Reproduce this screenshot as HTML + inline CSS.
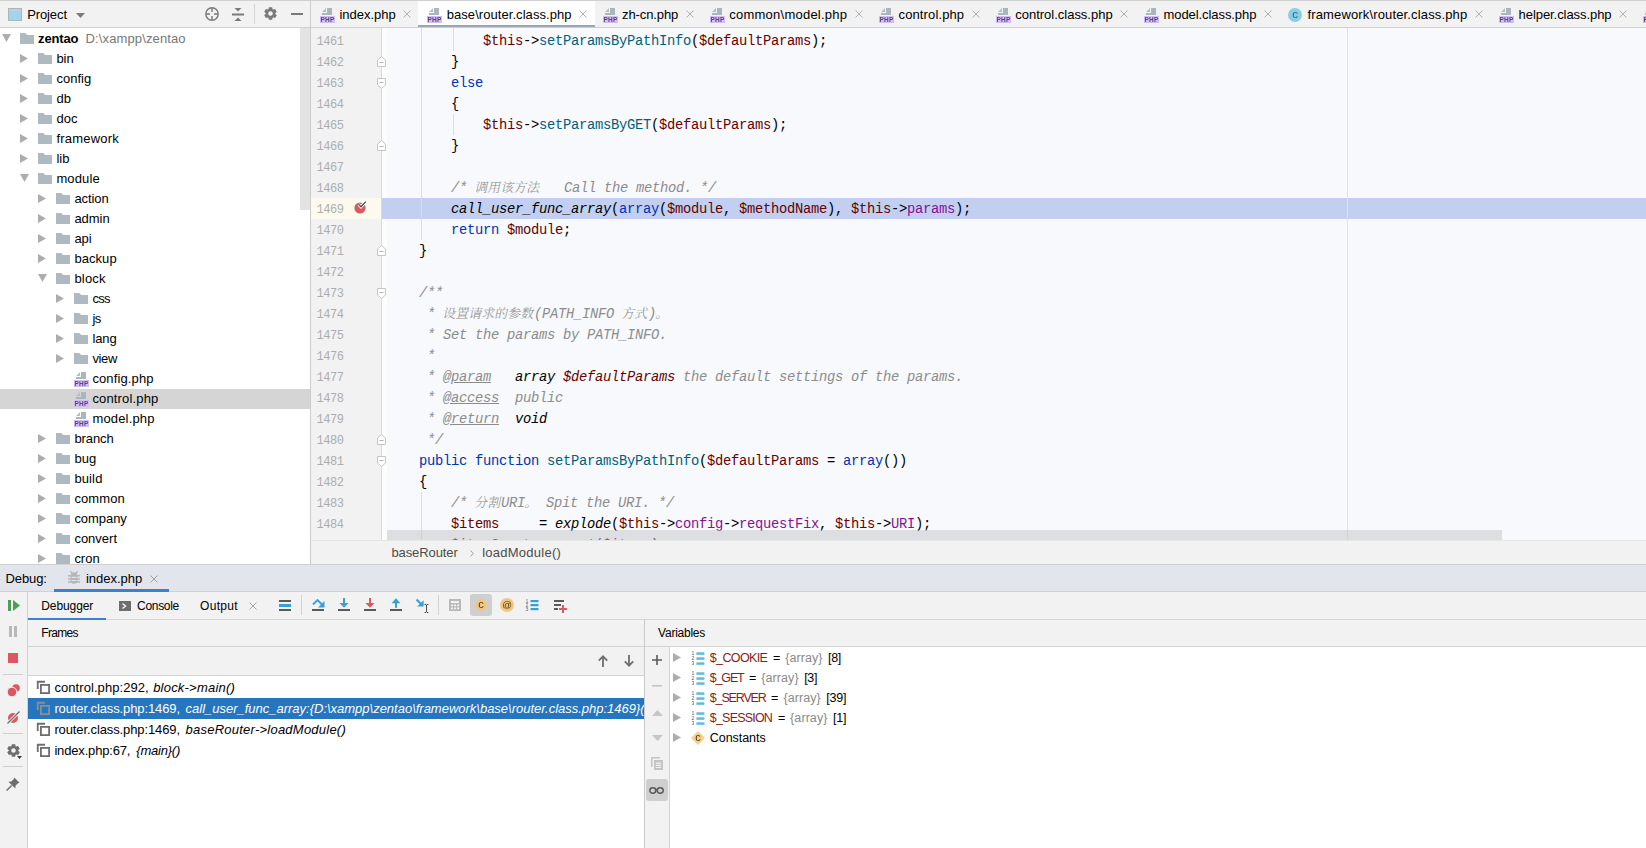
<!DOCTYPE html>
<html lang="en">
<head>
<meta charset="utf-8">
<title>zentao - router.class.php - PhpStorm</title>
<style>
*{box-sizing:border-box;margin:0;padding:0}
html,body{width:1646px;height:848px;overflow:hidden;background:#fff}
body{position:relative;font-family:"Liberation Sans","Noto Sans CJK SC",sans-serif;font-size:13px;color:#000}
.abs{position:absolute}
svg{display:block;overflow:visible}
.tx{position:absolute;top:0;white-space:pre}
#topline{left:0;top:0;width:1646px;height:1px;background:#d0d0d0}
#phead{left:0;top:1px;width:310px;height:27px;background:#f2f2f2;border-bottom:1px solid #d1d1d1;line-height:27px}
#tree{left:0;top:28px;width:310px;height:536px;background:#fff;overflow:hidden}
#vsep{left:310px;top:1px;width:1px;height:563px;background:#cbcbcb}
.row{position:absolute;left:0;width:310px;height:20px;line-height:19px;white-space:nowrap}
.row.sel{background:#d5d5d5}
.gray{color:#787878}
#tscroll{left:300px;top:0;width:10px;height:182px;background:#e3e3e3}
#tabs{left:311px;top:1px;width:1335px;height:27px;background:#f2f2f2;border-bottom:1px solid #d1d1d1;overflow:hidden;line-height:27px}
#tabact{left:107px;top:0;width:177px;height:26px;background:#fff}
#tabline{left:107px;top:24px;width:177px;height:3px;background:#99a5b9}
#editor{left:311px;top:28px;width:1335px;height:512px;background:#f7f9fd;overflow:hidden}
#gutter{left:0;top:0;width:71px;height:512px;background:#f2f2f2;border-right:1px solid #d9d9d9}
#gstrip{left:71px;top:0;width:5px;height:512px;background:#fdfdfe}
#curg{left:0;top:170px;width:70px;height:21px;background:#fcfaed}
#curl{left:71px;top:170px;width:1264px;height:21px;background:#c2cff0}
#margin{left:1036px;top:0;width:1px;height:512px;background:#e2e2e2}
.guide{position:absolute;width:1px;background:#dcdcdc}
.ln{position:absolute;left:0;width:70px;height:21px;line-height:21px;font-family:"Liberation Mono",monospace;color:#adadad}
.cl{position:absolute;left:76px;height:21px;line-height:21px;font-family:"Liberation Mono","Noto Sans CJK SC",monospace;font-size:13.8px;letter-spacing:-0.28px;white-space:pre;color:#000}
.cl b{letter-spacing:0;font-family:"Liberation Mono","Noto Serif CJK SC",serif;font-weight:300;font-size:13px;font-style:normal;display:inline-block;transform:skewX(-12deg)}
.v{color:#660000}.k{color:#0033b3}.f{color:#00627a}.p{color:#871094}.c{color:#8c8c8c;font-style:italic}.i{font-style:italic}
.u{text-decoration:underline}
#hscroll{left:76px;top:502px;width:1115px;height:10px;background:rgba(195,195,200,.5)}
#crumb{left:311px;top:540px;width:1335px;height:24px;background:#f2f2f2;border-top:1px solid #e6e6e6;line-height:24px;color:#4c4c4c}
#dhead{left:0;top:564px;width:1646px;height:28px;background:#e2e5ec;border-top:1px solid #d0d0d0;border-bottom:1px solid #d1d1d1;line-height:27px}
#dheadline{left:54px;top:24px;width:115px;height:3px;background:#3f80c9}
#dstripe{left:0;top:592px;width:28px;height:256px;background:#f2f2f2;border-right:1px solid #d1d1d1}
#dtool{left:28px;top:592px;width:1618px;height:28px;background:#f2f2f2;border-bottom:1px solid #d6d6d6;line-height:27px}
#dtabline{left:0;top:26px;width:78px;height:2px;background:#3f80c9}
.vs{position:absolute;width:1px;background:#d1d1d1}
.hs{position:absolute;height:1px;background:#cfcfcf}
#frames{left:28px;top:620px;width:616px;height:228px;background:#fff;overflow:hidden}
#fhead{left:0;top:0;width:616px;height:27px;background:#f2f2f2;border-bottom:1px solid #d4d4d4;line-height:27px}
#ftool{left:0;top:27px;width:616px;height:29px;background:#f2f2f2;border-bottom:1px solid #d4d4d4}
.fr{position:absolute;left:0;width:616px;height:21px;line-height:21px;white-space:nowrap;overflow:hidden}
.fr.sel{background:#2675bf;color:#fff}
#split{left:644px;top:620px;width:1px;height:228px;background:#c9c9c9}
#vars{left:645px;top:620px;width:1001px;height:228px;background:#fff;overflow:hidden}
#vhead{left:0;top:0;width:1001px;height:27px;background:#f2f2f2;border-bottom:1px solid #d4d4d4;line-height:27px}
#vtool{left:0;top:27px;width:25px;height:201px;background:#f2f2f2;border-right:1px solid #d1d1d1}
#vsel{left:1px;top:132px;width:22px;height:22px;background:#cfcfcf;border-radius:3px}
.vr{position:absolute;left:25px;width:976px;height:20px;line-height:22px;white-space:nowrap}
.vn{color:#8b1a1a}.vg{color:#808080}
</style>
</head>
<body>
<div class="abs" id="topline"></div>

<div class="abs" id="phead">
<svg class="abs" style="left:8px;top:7px" width="14" height="13" viewBox="0 0 14 13" ><rect x="0.5" y="0.5" width="13" height="12" fill="#9fd6eb" stroke="#aab5bc" stroke-width="1"/><rect x="1" y="1" width="12" height="2.2" fill="#c7cfd4"/></svg>
<span class="tx" style="left:27.2px;font-size:13px;letter-spacing:-0.109px;">Project</span>
<svg class="abs" style="left:75.5px;top:11.5px" width="9" height="5" viewBox="0 0 9 5" ><path d="M0 0h9L4.5 5z" fill="#7a7a7a"/></svg>
<svg class="abs" style="left:205px;top:6px" width="14" height="14" viewBox="0 0 14 14" ><circle cx="7" cy="7" r="6.2" fill="none" stroke="#7a7a7a" stroke-width="1.4"/><path d="M7 1v4M7 9v4M1 7h4M9 7h4" stroke="#7a7a7a" stroke-width="1.4"/></svg>
<svg class="abs" style="left:232px;top:6.5px" width="12" height="13" viewBox="0 0 12 13" ><path d="M2.5 0h7L6 3.5zM0 5.5h12v2H0zM2.5 13h7L6 9.5z" fill="#7a7a7a"/></svg>
<div class="vs" style="left:254px;top:3px;height:20px;background:#d4d4d4"></div>
<svg class="abs" style="left:264.3px;top:6px" width="13" height="13" viewBox="0 0 13 13" ><path d="M4.83 0.22L8.17 0.22L8.59 2.29L9.10 2.59L11.10 1.91L12.78 4.81L11.19 6.20L11.19 6.80L12.78 8.19L11.10 11.09L9.10 10.41L8.59 10.71L8.17 12.78L4.83 12.78L4.41 10.71L3.90 10.41L1.90 11.09L0.22 8.19L1.81 6.80L1.81 6.20L0.22 4.81L1.90 1.91L3.90 2.59L4.41 2.29z M8.8 6.5a2.3 2.3 0 1 0 -4.6 0a2.3 2.3 0 1 0 4.6 0z" fill="#7a7a7a" fill-rule="evenodd"/></svg>
<svg class="abs" style="left:291px;top:12px" width="12" height="2" viewBox="0 0 12 2" ><rect width="12" height="2" fill="#7a7a7a"/></svg>
</div>
<div class="abs" id="tree">
<div class="row" style="top:1px">
<svg class="abs" style="left:2px;top:5px" width="9" height="8" viewBox="0 0 9 8" ><path d="M0 0H9L4.5 8z" fill="#adadad"/></svg>
<svg class="abs" style="left:20px;top:4px" width="14" height="11" viewBox="0 0 14 11" ><path d="M0 0h5.2l2 2H14v9H0z" fill="#aeb9c0"/></svg>
<span class="tx" style="left:38.1px;font-size:13px;letter-spacing:-0.162px;font-weight:bold;">zentao</span>
<span class="tx" style="left:85.6px;font-size:13px;letter-spacing:0.122px;color:#787878;">D:\xampp\zentao</span>
</div>
<div class="row" style="top:21px">
<svg class="abs" style="left:20px;top:5px" width="8" height="9" viewBox="0 0 8 9" ><path d="M0 0L8 4.5L0 9z" fill="#adadad"/></svg>
<svg class="abs" style="left:38px;top:4px" width="14" height="11" viewBox="0 0 14 11" ><path d="M0 0h5.2l2 2H14v9H0z" fill="#aeb9c0"/></svg>
<span class="tx" style="left:56.4px;font-size:13px;letter-spacing:-0.016px;">bin</span>
</div>
<div class="row" style="top:41px">
<svg class="abs" style="left:20px;top:5px" width="8" height="9" viewBox="0 0 8 9" ><path d="M0 0L8 4.5L0 9z" fill="#adadad"/></svg>
<svg class="abs" style="left:38px;top:4px" width="14" height="11" viewBox="0 0 14 11" ><path d="M0 0h5.2l2 2H14v9H0z" fill="#aeb9c0"/></svg>
<span class="tx" style="left:56.4px;font-size:13px;letter-spacing:0.035px;">config</span>
</div>
<div class="row" style="top:61px">
<svg class="abs" style="left:20px;top:5px" width="8" height="9" viewBox="0 0 8 9" ><path d="M0 0L8 4.5L0 9z" fill="#adadad"/></svg>
<svg class="abs" style="left:38px;top:4px" width="14" height="11" viewBox="0 0 14 11" ><path d="M0 0h5.2l2 2H14v9H0z" fill="#aeb9c0"/></svg>
<span class="tx" style="left:56.4px;font-size:13px;letter-spacing:0.220px;">db</span>
</div>
<div class="row" style="top:81px">
<svg class="abs" style="left:20px;top:5px" width="8" height="9" viewBox="0 0 8 9" ><path d="M0 0L8 4.5L0 9z" fill="#adadad"/></svg>
<svg class="abs" style="left:38px;top:4px" width="14" height="11" viewBox="0 0 14 11" ><path d="M0 0h5.2l2 2H14v9H0z" fill="#aeb9c0"/></svg>
<span class="tx" style="left:56.4px;font-size:13px;letter-spacing:0.080px;">doc</span>
</div>
<div class="row" style="top:101px">
<svg class="abs" style="left:20px;top:5px" width="8" height="9" viewBox="0 0 8 9" ><path d="M0 0L8 4.5L0 9z" fill="#adadad"/></svg>
<svg class="abs" style="left:38px;top:4px" width="14" height="11" viewBox="0 0 14 11" ><path d="M0 0h5.2l2 2H14v9H0z" fill="#aeb9c0"/></svg>
<span class="tx" style="left:56.4px;font-size:13px;letter-spacing:0.214px;">framework</span>
</div>
<div class="row" style="top:121px">
<svg class="abs" style="left:20px;top:5px" width="8" height="9" viewBox="0 0 8 9" ><path d="M0 0L8 4.5L0 9z" fill="#adadad"/></svg>
<svg class="abs" style="left:38px;top:4px" width="14" height="11" viewBox="0 0 14 11" ><path d="M0 0h5.2l2 2H14v9H0z" fill="#aeb9c0"/></svg>
<span class="tx" style="left:56.4px;font-size:13px;letter-spacing:0.031px;">lib</span>
</div>
<div class="row" style="top:141px">
<svg class="abs" style="left:20px;top:5px" width="9" height="8" viewBox="0 0 9 8" ><path d="M0 0H9L4.5 8z" fill="#adadad"/></svg>
<svg class="abs" style="left:38px;top:4px" width="14" height="11" viewBox="0 0 14 11" ><path d="M0 0h5.2l2 2H14v9H0z" fill="#aeb9c0"/></svg>
<span class="tx" style="left:56.4px;font-size:13px;letter-spacing:0.144px;">module</span>
</div>
<div class="row" style="top:161px">
<svg class="abs" style="left:38px;top:5px" width="8" height="9" viewBox="0 0 8 9" ><path d="M0 0L8 4.5L0 9z" fill="#adadad"/></svg>
<svg class="abs" style="left:56px;top:4px" width="14" height="11" viewBox="0 0 14 11" ><path d="M0 0h5.2l2 2H14v9H0z" fill="#aeb9c0"/></svg>
<span class="tx" style="left:74.4px;font-size:13px;letter-spacing:-0.065px;">action</span>
</div>
<div class="row" style="top:181px">
<svg class="abs" style="left:38px;top:5px" width="8" height="9" viewBox="0 0 8 9" ><path d="M0 0L8 4.5L0 9z" fill="#adadad"/></svg>
<svg class="abs" style="left:56px;top:4px" width="14" height="11" viewBox="0 0 14 11" ><path d="M0 0h5.2l2 2H14v9H0z" fill="#aeb9c0"/></svg>
<span class="tx" style="left:74.4px;font-size:13px;letter-spacing:-0.021px;">admin</span>
</div>
<div class="row" style="top:201px">
<svg class="abs" style="left:38px;top:5px" width="8" height="9" viewBox="0 0 8 9" ><path d="M0 0L8 4.5L0 9z" fill="#adadad"/></svg>
<svg class="abs" style="left:56px;top:4px" width="14" height="11" viewBox="0 0 14 11" ><path d="M0 0h5.2l2 2H14v9H0z" fill="#aeb9c0"/></svg>
<span class="tx" style="left:74.4px;font-size:13px;letter-spacing:-0.049px;">api</span>
</div>
<div class="row" style="top:221px">
<svg class="abs" style="left:38px;top:5px" width="8" height="9" viewBox="0 0 8 9" ><path d="M0 0L8 4.5L0 9z" fill="#adadad"/></svg>
<svg class="abs" style="left:56px;top:4px" width="14" height="11" viewBox="0 0 14 11" ><path d="M0 0h5.2l2 2H14v9H0z" fill="#aeb9c0"/></svg>
<span class="tx" style="left:74.4px;font-size:13px;letter-spacing:0.063px;">backup</span>
</div>
<div class="row" style="top:241px">
<svg class="abs" style="left:38px;top:5px" width="9" height="8" viewBox="0 0 9 8" ><path d="M0 0H9L4.5 8z" fill="#adadad"/></svg>
<svg class="abs" style="left:56px;top:4px" width="14" height="11" viewBox="0 0 14 11" ><path d="M0 0h5.2l2 2H14v9H0z" fill="#aeb9c0"/></svg>
<span class="tx" style="left:74.4px;font-size:13px;letter-spacing:0.210px;">block</span>
</div>
<div class="row" style="top:261px">
<svg class="abs" style="left:56px;top:5px" width="8" height="9" viewBox="0 0 8 9" ><path d="M0 0L8 4.5L0 9z" fill="#adadad"/></svg>
<svg class="abs" style="left:74px;top:4px" width="14" height="11" viewBox="0 0 14 11" ><path d="M0 0h5.2l2 2H14v9H0z" fill="#aeb9c0"/></svg>
<span class="tx" style="left:92.4px;font-size:13px;letter-spacing:-0.733px;">css</span>
</div>
<div class="row" style="top:281px">
<svg class="abs" style="left:56px;top:5px" width="8" height="9" viewBox="0 0 8 9" ><path d="M0 0L8 4.5L0 9z" fill="#adadad"/></svg>
<svg class="abs" style="left:74px;top:4px" width="14" height="11" viewBox="0 0 14 11" ><path d="M0 0h5.2l2 2H14v9H0z" fill="#aeb9c0"/></svg>
<span class="tx" style="left:92.4px;font-size:13px;letter-spacing:-0.594px;">js</span>
</div>
<div class="row" style="top:301px">
<svg class="abs" style="left:56px;top:5px" width="8" height="9" viewBox="0 0 8 9" ><path d="M0 0L8 4.5L0 9z" fill="#adadad"/></svg>
<svg class="abs" style="left:74px;top:4px" width="14" height="11" viewBox="0 0 14 11" ><path d="M0 0h5.2l2 2H14v9H0z" fill="#aeb9c0"/></svg>
<span class="tx" style="left:92.4px;font-size:13px;letter-spacing:-0.120px;">lang</span>
</div>
<div class="row" style="top:321px">
<svg class="abs" style="left:56px;top:5px" width="8" height="9" viewBox="0 0 8 9" ><path d="M0 0L8 4.5L0 9z" fill="#adadad"/></svg>
<svg class="abs" style="left:74px;top:4px" width="14" height="11" viewBox="0 0 14 11" ><path d="M0 0h5.2l2 2H14v9H0z" fill="#aeb9c0"/></svg>
<span class="tx" style="left:92.4px;font-size:13px;letter-spacing:-0.352px;">view</span>
</div>
<div class="row" style="top:341px">
<svg class="abs" style="left:74px;top:2px;will-change:transform" width="16" height="17" viewBox="0 0 16 17" ><path d="M6 1L6 5L2 5z" fill="#b4bec5"/><path d="M7 1h5v7H2V6h5z" fill="#aab5bc"/><rect x="0" y="9" width="15" height="7" fill="#d4bdf7"/><text transform="translate(7.5 15.2) scale(0.5)" text-anchor="middle" font-family="Liberation Sans,sans-serif" font-weight="bold" font-size="13" letter-spacing="0.6" fill="#584a6c">PHP</text></svg>
<span class="tx" style="left:92.4px;font-size:13px;letter-spacing:0.121px;">config.php</span>
</div>
<div class="row sel" style="top:361px">
<svg class="abs" style="left:74px;top:2px;will-change:transform" width="16" height="17" viewBox="0 0 16 17" ><path d="M6 1L6 5L2 5z" fill="#b4bec5"/><path d="M7 1h5v7H2V6h5z" fill="#aab5bc"/><rect x="0" y="9" width="15" height="7" fill="#d4bdf7"/><text transform="translate(7.5 15.2) scale(0.5)" text-anchor="middle" font-family="Liberation Sans,sans-serif" font-weight="bold" font-size="13" letter-spacing="0.6" fill="#584a6c">PHP</text></svg>
<span class="tx" style="left:92.4px;font-size:13px;letter-spacing:0.162px;">control.php</span>
</div>
<div class="row" style="top:381px">
<svg class="abs" style="left:74px;top:2px;will-change:transform" width="16" height="17" viewBox="0 0 16 17" ><path d="M6 1L6 5L2 5z" fill="#b4bec5"/><path d="M7 1h5v7H2V6h5z" fill="#aab5bc"/><rect x="0" y="9" width="15" height="7" fill="#d4bdf7"/><text transform="translate(7.5 15.2) scale(0.5)" text-anchor="middle" font-family="Liberation Sans,sans-serif" font-weight="bold" font-size="13" letter-spacing="0.6" fill="#584a6c">PHP</text></svg>
<span class="tx" style="left:92.4px;font-size:13px;letter-spacing:0.166px;">model.php</span>
</div>
<div class="row" style="top:401px">
<svg class="abs" style="left:38px;top:5px" width="8" height="9" viewBox="0 0 8 9" ><path d="M0 0L8 4.5L0 9z" fill="#adadad"/></svg>
<svg class="abs" style="left:56px;top:4px" width="14" height="11" viewBox="0 0 14 11" ><path d="M0 0h5.2l2 2H14v9H0z" fill="#aeb9c0"/></svg>
<span class="tx" style="left:74.4px;font-size:13px;letter-spacing:-0.092px;">branch</span>
</div>
<div class="row" style="top:421px">
<svg class="abs" style="left:38px;top:5px" width="8" height="9" viewBox="0 0 8 9" ><path d="M0 0L8 4.5L0 9z" fill="#adadad"/></svg>
<svg class="abs" style="left:56px;top:4px" width="14" height="11" viewBox="0 0 14 11" ><path d="M0 0h5.2l2 2H14v9H0z" fill="#aeb9c0"/></svg>
<span class="tx" style="left:74.4px;font-size:13px;letter-spacing:0.137px;">bug</span>
</div>
<div class="row" style="top:441px">
<svg class="abs" style="left:38px;top:5px" width="8" height="9" viewBox="0 0 8 9" ><path d="M0 0L8 4.5L0 9z" fill="#adadad"/></svg>
<svg class="abs" style="left:56px;top:4px" width="14" height="11" viewBox="0 0 14 11" ><path d="M0 0h5.2l2 2H14v9H0z" fill="#aeb9c0"/></svg>
<span class="tx" style="left:74.4px;font-size:13px;letter-spacing:0.127px;">build</span>
</div>
<div class="row" style="top:461px">
<svg class="abs" style="left:38px;top:5px" width="8" height="9" viewBox="0 0 8 9" ><path d="M0 0L8 4.5L0 9z" fill="#adadad"/></svg>
<svg class="abs" style="left:56px;top:4px" width="14" height="11" viewBox="0 0 14 11" ><path d="M0 0h5.2l2 2H14v9H0z" fill="#aeb9c0"/></svg>
<span class="tx" style="left:74.4px;font-size:13px;letter-spacing:0.092px;">common</span>
</div>
<div class="row" style="top:481px">
<svg class="abs" style="left:38px;top:5px" width="8" height="9" viewBox="0 0 8 9" ><path d="M0 0L8 4.5L0 9z" fill="#adadad"/></svg>
<svg class="abs" style="left:56px;top:4px" width="14" height="11" viewBox="0 0 14 11" ><path d="M0 0h5.2l2 2H14v9H0z" fill="#aeb9c0"/></svg>
<span class="tx" style="left:74.4px;font-size:13px;letter-spacing:-0.050px;">company</span>
</div>
<div class="row" style="top:501px">
<svg class="abs" style="left:38px;top:5px" width="8" height="9" viewBox="0 0 8 9" ><path d="M0 0L8 4.5L0 9z" fill="#adadad"/></svg>
<svg class="abs" style="left:56px;top:4px" width="14" height="11" viewBox="0 0 14 11" ><path d="M0 0h5.2l2 2H14v9H0z" fill="#aeb9c0"/></svg>
<span class="tx" style="left:74.4px;font-size:13px;">convert</span>
</div>
<div class="row" style="top:521px">
<svg class="abs" style="left:38px;top:5px" width="8" height="9" viewBox="0 0 8 9" ><path d="M0 0L8 4.5L0 9z" fill="#adadad"/></svg>
<svg class="abs" style="left:56px;top:4px" width="14" height="11" viewBox="0 0 14 11" ><path d="M0 0h5.2l2 2H14v9H0z" fill="#aeb9c0"/></svg>
<span class="tx" style="left:74.4px;font-size:13px;letter-spacing:-0.022px;">cron</span>
</div>
<div class="abs" id="tscroll"></div>
</div>
<div class="abs" id="vsep"></div>
<div class="abs" id="tabs">
<div class="abs" id="tabact"></div>
<svg class="abs" style="left:9px;top:6px;will-change:transform" width="16" height="17" viewBox="0 0 16 17" ><path d="M6 1L6 5L2 5z" fill="#b4bec5"/><path d="M7 1h5v7H2V6h5z" fill="#aab5bc"/><rect x="0" y="9" width="15" height="7" fill="#d4bdf7"/><text transform="translate(7.5 15.2) scale(0.5)" text-anchor="middle" font-family="Liberation Sans,sans-serif" font-weight="bold" font-size="13" letter-spacing="0.6" fill="#584a6c">PHP</text></svg>
<span class="tx" style="left:28.5px;font-size:13px;letter-spacing:-0.031px;">index.php</span>
<svg class="abs" style="left:92.0px;top:9px" width="8" height="8" viewBox="0 0 8 8" ><path d="M0.5 0.5L7.5 7.5M7.5 0.5L0.5 7.5" stroke="#b0b0b0" stroke-width="1" fill="none"/></svg>
<svg class="abs" style="left:116px;top:6px;will-change:transform" width="16" height="17" viewBox="0 0 16 17" ><path d="M6 1L6 5L2 5z" fill="#b4bec5"/><path d="M7 1h5v7H2V6h5z" fill="#aab5bc"/><rect x="0" y="9" width="15" height="7" fill="#d4bdf7"/><text transform="translate(7.5 15.2) scale(0.5)" text-anchor="middle" font-family="Liberation Sans,sans-serif" font-weight="bold" font-size="13" letter-spacing="0.6" fill="#584a6c">PHP</text></svg>
<span class="tx" style="left:135.7px;font-size:13px;letter-spacing:0.063px;">base\router.class.php</span>
<svg class="abs" style="left:267.5px;top:9px" width="8" height="8" viewBox="0 0 8 8" ><path d="M0.5 0.5L7.5 7.5M7.5 0.5L0.5 7.5" stroke="#b0b0b0" stroke-width="1" fill="none"/></svg>
<svg class="abs" style="left:292px;top:6px;will-change:transform" width="16" height="17" viewBox="0 0 16 17" ><path d="M6 1L6 5L2 5z" fill="#b4bec5"/><path d="M7 1h5v7H2V6h5z" fill="#aab5bc"/><rect x="0" y="9" width="15" height="7" fill="#d4bdf7"/><text transform="translate(7.5 15.2) scale(0.5)" text-anchor="middle" font-family="Liberation Sans,sans-serif" font-weight="bold" font-size="13" letter-spacing="0.6" fill="#584a6c">PHP</text></svg>
<span class="tx" style="left:311px;font-size:13px;letter-spacing:-0.099px;">zh-cn.php</span>
<svg class="abs" style="left:374.70000000000005px;top:9px" width="8" height="8" viewBox="0 0 8 8" ><path d="M0.5 0.5L7.5 7.5M7.5 0.5L0.5 7.5" stroke="#b0b0b0" stroke-width="1" fill="none"/></svg>
<svg class="abs" style="left:399px;top:6px;will-change:transform" width="16" height="17" viewBox="0 0 16 17" ><path d="M6 1L6 5L2 5z" fill="#b4bec5"/><path d="M7 1h5v7H2V6h5z" fill="#aab5bc"/><rect x="0" y="9" width="15" height="7" fill="#d4bdf7"/><text transform="translate(7.5 15.2) scale(0.5)" text-anchor="middle" font-family="Liberation Sans,sans-serif" font-weight="bold" font-size="13" letter-spacing="0.6" fill="#584a6c">PHP</text></svg>
<span class="tx" style="left:418.3px;font-size:13px;letter-spacing:0.233px;">common\model.php</span>
<svg class="abs" style="left:543.5px;top:9px" width="8" height="8" viewBox="0 0 8 8" ><path d="M0.5 0.5L7.5 7.5M7.5 0.5L0.5 7.5" stroke="#b0b0b0" stroke-width="1" fill="none"/></svg>
<svg class="abs" style="left:568px;top:6px;will-change:transform" width="16" height="17" viewBox="0 0 16 17" ><path d="M6 1L6 5L2 5z" fill="#b4bec5"/><path d="M7 1h5v7H2V6h5z" fill="#aab5bc"/><rect x="0" y="9" width="15" height="7" fill="#d4bdf7"/><text transform="translate(7.5 15.2) scale(0.5)" text-anchor="middle" font-family="Liberation Sans,sans-serif" font-weight="bold" font-size="13" letter-spacing="0.6" fill="#584a6c">PHP</text></svg>
<span class="tx" style="left:587.5px;font-size:13px;letter-spacing:0.125px;">control.php</span>
<svg class="abs" style="left:660.7px;top:9px" width="8" height="8" viewBox="0 0 8 8" ><path d="M0.5 0.5L7.5 7.5M7.5 0.5L0.5 7.5" stroke="#b0b0b0" stroke-width="1" fill="none"/></svg>
<svg class="abs" style="left:685px;top:6px;will-change:transform" width="16" height="17" viewBox="0 0 16 17" ><path d="M6 1L6 5L2 5z" fill="#b4bec5"/><path d="M7 1h5v7H2V6h5z" fill="#aab5bc"/><rect x="0" y="9" width="15" height="7" fill="#d4bdf7"/><text transform="translate(7.5 15.2) scale(0.5)" text-anchor="middle" font-family="Liberation Sans,sans-serif" font-weight="bold" font-size="13" letter-spacing="0.6" fill="#584a6c">PHP</text></svg>
<span class="tx" style="left:704.3px;font-size:13px;letter-spacing:-0.015px;">control.class.php</span>
<svg class="abs" style="left:809.0999999999999px;top:9px" width="8" height="8" viewBox="0 0 8 8" ><path d="M0.5 0.5L7.5 7.5M7.5 0.5L0.5 7.5" stroke="#b0b0b0" stroke-width="1" fill="none"/></svg>
<svg class="abs" style="left:833px;top:6px;will-change:transform" width="16" height="17" viewBox="0 0 16 17" ><path d="M6 1L6 5L2 5z" fill="#b4bec5"/><path d="M7 1h5v7H2V6h5z" fill="#aab5bc"/><rect x="0" y="9" width="15" height="7" fill="#d4bdf7"/><text transform="translate(7.5 15.2) scale(0.5)" text-anchor="middle" font-family="Liberation Sans,sans-serif" font-weight="bold" font-size="13" letter-spacing="0.6" fill="#584a6c">PHP</text></svg>
<span class="tx" style="left:852.5px;font-size:13px;letter-spacing:-0.076px;">model.class.php</span>
<svg class="abs" style="left:952.8px;top:9px" width="8" height="8" viewBox="0 0 8 8" ><path d="M0.5 0.5L7.5 7.5M7.5 0.5L0.5 7.5" stroke="#b0b0b0" stroke-width="1" fill="none"/></svg>
<svg class="abs" style="left:977px;top:7px;will-change:transform" width="14" height="14" viewBox="0 0 14 14" ><circle cx="7" cy="7" r="7" fill="#87cfe8"/><text x="7" y="10.1" text-anchor="middle" font-family="Liberation Sans,sans-serif" font-size="11.5" fill="#3f5a6a">c</text></svg>
<span class="tx" style="left:996.4px;font-size:13px;letter-spacing:0.151px;">framework\router.class.php</span>
<svg class="abs" style="left:1164.0px;top:9px" width="8" height="8" viewBox="0 0 8 8" ><path d="M0.5 0.5L7.5 7.5M7.5 0.5L0.5 7.5" stroke="#b0b0b0" stroke-width="1" fill="none"/></svg>
<svg class="abs" style="left:1188px;top:6px;will-change:transform" width="16" height="17" viewBox="0 0 16 17" ><path d="M6 1L6 5L2 5z" fill="#b4bec5"/><path d="M7 1h5v7H2V6h5z" fill="#aab5bc"/><rect x="0" y="9" width="15" height="7" fill="#d4bdf7"/><text transform="translate(7.5 15.2) scale(0.5)" text-anchor="middle" font-family="Liberation Sans,sans-serif" font-weight="bold" font-size="13" letter-spacing="0.6" fill="#584a6c">PHP</text></svg>
<span class="tx" style="left:1207.6px;font-size:13px;letter-spacing:-0.066px;">helper.class.php</span>
<svg class="abs" style="left:1307.7px;top:9px" width="8" height="8" viewBox="0 0 8 8" ><path d="M0.5 0.5L7.5 7.5M7.5 0.5L0.5 7.5" stroke="#b0b0b0" stroke-width="1" fill="none"/></svg>
<svg class="abs" style="left:1332px;top:6px;will-change:transform" width="16" height="17" viewBox="0 0 16 17" ><path d="M6 1L6 5L2 5z" fill="#b4bec5"/><path d="M7 1h5v7H2V6h5z" fill="#aab5bc"/><rect x="0" y="9" width="15" height="7" fill="#d4bdf7"/><text transform="translate(7.5 15.2) scale(0.5)" text-anchor="middle" font-family="Liberation Sans,sans-serif" font-weight="bold" font-size="13" letter-spacing="0.6" fill="#584a6c">PHP</text></svg>
<div class="abs" id="tabline"></div>
</div>
<div class="abs" id="editor">
<div class="abs" id="gstrip"></div>
<div class="abs" id="curl"></div>
<div class="abs" id="margin"></div>
<div class="guide" style="left:110px;top:0px;height:212px"></div>
<div class="guide" style="left:142px;top:0px;height:23px"></div>
<div class="guide" style="left:142px;top:86px;height:21px"></div>
<div class="guide" style="left:110px;top:464px;height:48px"></div>
<div class="cl" style="top:2.5px">            <span class="v">$this</span>-&gt;<span class="f">setParamsByPathInfo</span>(<span class="v">$defaultParams</span>);</div>
<div class="cl" style="top:23.5px">        }</div>
<div class="cl" style="top:44.5px">        <span class="k">else</span></div>
<div class="cl" style="top:65.5px">        {</div>
<div class="cl" style="top:86.5px">            <span class="v">$this</span>-&gt;<span class="f">setParamsByGET</span>(<span class="v">$defaultParams</span>);</div>
<div class="cl" style="top:107.5px">        }</div>
<div class="cl" style="top:128.5px"></div>
<div class="cl" style="top:149.5px">        <span class="c">/* <b>调用该方法</b>   Call the method. */</span></div>
<div class="cl" style="top:170.5px">        <span class="i">call_user_func_array</span>(<span class="k">array</span>(<span class="v">$module</span>, <span class="v">$methodName</span>), <span class="v">$this</span>-&gt;<span class="p">params</span>);</div>
<div class="cl" style="top:191.5px">        <span class="k">return</span> <span class="v">$module</span>;</div>
<div class="cl" style="top:212.5px">    }</div>
<div class="cl" style="top:233.5px"></div>
<div class="cl" style="top:254.5px">    <span class="c">/**</span></div>
<div class="cl" style="top:275.5px">     <span class="c">* <b>设置请求的参数</b>(PATH_INFO <b>方式</b>)<b>。</b></span></div>
<div class="cl" style="top:296.5px">     <span class="c">* Set the params by PATH_INFO.</span></div>
<div class="cl" style="top:317.5px">     <span class="c">*</span></div>
<div class="cl" style="top:338.5px">     <span class="c">* <span class="u">@param</span>   </span><span class="i">array</span> <span class="v i">$defaultParams</span><span class="c"> the default settings of the params.</span></div>
<div class="cl" style="top:359.5px">     <span class="c">* <span class="u">@access</span>  public</span></div>
<div class="cl" style="top:380.5px">     <span class="c">* <span class="u">@return</span>  </span><span class="i">void</span></div>
<div class="cl" style="top:401.5px">     <span class="c">*/</span></div>
<div class="cl" style="top:422.5px">    <span class="k">public</span> <span class="k">function</span> <span class="f">setParamsByPathInfo</span>(<span class="v">$defaultParams</span> = <span class="k">array</span>())</div>
<div class="cl" style="top:443.5px">    {</div>
<div class="cl" style="top:464.5px">        <span class="c">/* <b>分割</b>URI<b>。</b> Spit the URI. */</span></div>
<div class="cl" style="top:485.5px">        <span class="v">$items</span>     = <span class="i">explode</span>(<span class="v">$this</span>-&gt;<span class="p">config</span>-&gt;<span class="p">requestFix</span>, <span class="v">$this</span>-&gt;<span class="p">URI</span>);</div>
<div class="cl" style="top:506.5px">        <span class="v">$itemCount</span> = <span class="i">count</span>(<span class="v">$items</span>);</div>
<div class="abs" id="hscroll"></div>
<div class="abs" id="gutter"><div class="abs" id="curg"></div>
<div class="ln" style="top:4px"><span class="tx" style="left:5.6px;font-size:12px;letter-spacing:-0.476px;">1461</span></div>
<div class="ln" style="top:25px"><span class="tx" style="left:5.6px;font-size:12px;letter-spacing:-0.476px;">1462</span></div>
<div class="ln" style="top:46px"><span class="tx" style="left:5.6px;font-size:12px;letter-spacing:-0.476px;">1463</span></div>
<div class="ln" style="top:67px"><span class="tx" style="left:5.6px;font-size:12px;letter-spacing:-0.476px;">1464</span></div>
<div class="ln" style="top:88px"><span class="tx" style="left:5.6px;font-size:12px;letter-spacing:-0.476px;">1465</span></div>
<div class="ln" style="top:109px"><span class="tx" style="left:5.6px;font-size:12px;letter-spacing:-0.476px;">1466</span></div>
<div class="ln" style="top:130px"><span class="tx" style="left:5.6px;font-size:12px;letter-spacing:-0.476px;">1467</span></div>
<div class="ln" style="top:151px"><span class="tx" style="left:5.6px;font-size:12px;letter-spacing:-0.476px;">1468</span></div>
<div class="ln" style="top:172px"><span class="tx" style="left:5.6px;font-size:12px;letter-spacing:-0.476px;">1469</span></div>
<div class="ln" style="top:193px"><span class="tx" style="left:5.6px;font-size:12px;letter-spacing:-0.476px;">1470</span></div>
<div class="ln" style="top:214px"><span class="tx" style="left:5.6px;font-size:12px;letter-spacing:-0.476px;">1471</span></div>
<div class="ln" style="top:235px"><span class="tx" style="left:5.6px;font-size:12px;letter-spacing:-0.476px;">1472</span></div>
<div class="ln" style="top:256px"><span class="tx" style="left:5.6px;font-size:12px;letter-spacing:-0.476px;">1473</span></div>
<div class="ln" style="top:277px"><span class="tx" style="left:5.6px;font-size:12px;letter-spacing:-0.476px;">1474</span></div>
<div class="ln" style="top:298px"><span class="tx" style="left:5.6px;font-size:12px;letter-spacing:-0.476px;">1475</span></div>
<div class="ln" style="top:319px"><span class="tx" style="left:5.6px;font-size:12px;letter-spacing:-0.476px;">1476</span></div>
<div class="ln" style="top:340px"><span class="tx" style="left:5.6px;font-size:12px;letter-spacing:-0.476px;">1477</span></div>
<div class="ln" style="top:361px"><span class="tx" style="left:5.6px;font-size:12px;letter-spacing:-0.476px;">1478</span></div>
<div class="ln" style="top:382px"><span class="tx" style="left:5.6px;font-size:12px;letter-spacing:-0.476px;">1479</span></div>
<div class="ln" style="top:403px"><span class="tx" style="left:5.6px;font-size:12px;letter-spacing:-0.476px;">1480</span></div>
<div class="ln" style="top:424px"><span class="tx" style="left:5.6px;font-size:12px;letter-spacing:-0.476px;">1481</span></div>
<div class="ln" style="top:445px"><span class="tx" style="left:5.6px;font-size:12px;letter-spacing:-0.476px;">1482</span></div>
<div class="ln" style="top:466px"><span class="tx" style="left:5.6px;font-size:12px;letter-spacing:-0.476px;">1483</span></div>
<div class="ln" style="top:487px"><span class="tx" style="left:5.6px;font-size:12px;letter-spacing:-0.476px;">1484</span></div>
<div class="ln" style="top:508px"><span class="tx" style="left:5.6px;font-size:12px;letter-spacing:-0.476px;">1485</span></div>
<svg class="abs" style="left:43px;top:172px" width="14" height="14" viewBox="0 0 14 14" ><circle cx="6" cy="8" r="5.6" fill="#db5860"/><path d="M4.6 4.4L7 6.8L11.8 1.6" fill="none" stroke="#fff" stroke-width="3"/><path d="M4.6 4.4L7 6.8L11.8 1.6" fill="none" stroke="#4a4a4a" stroke-width="1.3"/></svg>
</div>
<svg class="abs" style="left:66px;top:28px" width="9" height="11" viewBox="0 0 9 11" ><path d="M0.5 10.5V4L4.5 0.6L8.5 4V10.5z" fill="#fff" stroke="#c4c4c4" stroke-width="1"/><path d="M2.5 6.5h4" stroke="#b4b4b4" stroke-width="1"/></svg>
<svg class="abs" style="left:66px;top:50px" width="9" height="11" viewBox="0 0 9 11" ><path d="M0.5 0.5V7L4.5 10.4L8.5 7V0.5z" fill="#fff" stroke="#c4c4c4" stroke-width="1"/><path d="M2.5 4.5h4" stroke="#b4b4b4" stroke-width="1"/></svg>
<svg class="abs" style="left:66px;top:112px" width="9" height="11" viewBox="0 0 9 11" ><path d="M0.5 10.5V4L4.5 0.6L8.5 4V10.5z" fill="#fff" stroke="#c4c4c4" stroke-width="1"/><path d="M2.5 6.5h4" stroke="#b4b4b4" stroke-width="1"/></svg>
<svg class="abs" style="left:66px;top:217px" width="9" height="11" viewBox="0 0 9 11" ><path d="M0.5 10.5V4L4.5 0.6L8.5 4V10.5z" fill="#fff" stroke="#c4c4c4" stroke-width="1"/><path d="M2.5 6.5h4" stroke="#b4b4b4" stroke-width="1"/></svg>
<svg class="abs" style="left:66px;top:260px" width="9" height="11" viewBox="0 0 9 11" ><path d="M0.5 0.5V7L4.5 10.4L8.5 7V0.5z" fill="#fff" stroke="#c4c4c4" stroke-width="1"/><path d="M2.5 4.5h4" stroke="#b4b4b4" stroke-width="1"/></svg>
<svg class="abs" style="left:66px;top:406px" width="9" height="11" viewBox="0 0 9 11" ><path d="M0.5 10.5V4L4.5 0.6L8.5 4V10.5z" fill="#fff" stroke="#c4c4c4" stroke-width="1"/><path d="M2.5 6.5h4" stroke="#b4b4b4" stroke-width="1"/></svg>
<svg class="abs" style="left:66px;top:428px" width="9" height="11" viewBox="0 0 9 11" ><path d="M0.5 0.5V7L4.5 10.4L8.5 7V0.5z" fill="#fff" stroke="#c4c4c4" stroke-width="1"/><path d="M2.5 4.5h4" stroke="#b4b4b4" stroke-width="1"/></svg>
</div>
<div class="abs" id="crumb">
<span class="tx" style="left:80.4px;font-size:13px;letter-spacing:-0.091px;">baseRouter</span>
<svg class="abs" style="left:159px;top:8.5px" width="4" height="7" viewBox="0 0 4 7" ><path d="M0.5 0.5L3.3 3.5L0.5 6.5" fill="none" stroke="#a0a0a0" stroke-width="1"/></svg>
<span class="tx" style="left:171.2px;font-size:13px;letter-spacing:0.252px;">loadModule()</span>
</div>
<div class="abs" id="dhead">
<span class="tx" style="left:5.5px;font-size:13px;letter-spacing:-0.103px;">Debug:</span>
<svg class="abs" style="left:68px;top:6.3px" width="12" height="13" viewBox="0 0 12 13" ><rect x="2.6" y="1.3" width="6.8" height="11.4" rx="3.4" fill="#b6b6b6"/><path d="M3.9 2L2.3 0.2M8.1 2L9.7 0.2" stroke="#b6b6b6" stroke-width="1.2"/><path d="M0 4.8h12M0 7.9h12M0 11h12" stroke="#b6b6b6" stroke-width="1.5"/><path d="M3.6 6.4h4.8M3.6 9.5h4.8" stroke="#e2e5ec" stroke-width="1.1"/></svg>
<span class="tx" style="left:86px;font-size:13px;letter-spacing:-0.020px;">index.php</span>
<svg class="abs" style="left:150.2px;top:10px" width="8" height="8" viewBox="0 0 8 8" ><path d="M0.5 0.5L7.5 7.5M7.5 0.5L0.5 7.5" stroke="#a0a0a0" stroke-width="1" fill="none"/></svg>
<div class="abs" id="dheadline"></div>
</div>
<div class="abs" id="dstripe">
<svg class="abs" style="left:8px;top:8px" width="12" height="11" viewBox="0 0 12 11" ><path d="M0 0h3v11H0zM5 0l7 5.5L5 11z" fill="#4c9e58"/></svg>
<svg class="abs" style="left:9px;top:34px" width="8" height="11" viewBox="0 0 8 11" ><path d="M0 0h3v11H0zM5 0h3v11H5z" fill="#b8b8b8"/></svg>
<svg class="abs" style="left:8px;top:61px" width="10" height="10" viewBox="0 0 10 10" ><rect width="10" height="10" fill="#db5860"/></svg>
<div class="hs" style="left:3px;top:82px;width:20px"></div>
<svg class="abs" style="left:7px;top:92px" width="13" height="13" viewBox="0 0 13 13" ><circle cx="9" cy="4" r="3.8" fill="#db5860"/><circle cx="5" cy="8" r="4.8" fill="#db5860" stroke="#f2f2f2" stroke-width="1"/></svg>
<svg class="abs" style="left:7px;top:119px" width="13" height="13" viewBox="0 0 13 13" ><circle cx="6" cy="7" r="5" fill="#db5860"/><path d="M0.5 12.5L12.5 0.5" stroke="#f2f2f2" stroke-width="3"/><path d="M0.5 12.5L12.5 0.5" stroke="#6e6e6e" stroke-width="1.2"/></svg>
<div class="hs" style="left:3px;top:141px;width:20px"></div>
<svg class="abs" style="left:6.5px;top:151.5px" width="13" height="13" viewBox="0 0 13 13" ><path d="M4.83 0.22L8.17 0.22L8.59 2.29L9.10 2.59L11.10 1.91L12.78 4.81L11.19 6.20L11.19 6.80L12.78 8.19L11.10 11.09L9.10 10.41L8.59 10.71L8.17 12.78L4.83 12.78L4.41 10.71L3.90 10.41L1.90 11.09L0.22 8.19L1.81 6.80L1.81 6.20L0.22 4.81L1.90 1.91L3.90 2.59L4.41 2.29z M8.8 6.5a2.3 2.3 0 1 0 -4.6 0a2.3 2.3 0 1 0 4.6 0z" fill="#6e6e6e" fill-rule="evenodd"/></svg>
<svg class="abs" style="left:16.5px;top:163.5px" width="5" height="3" viewBox="0 0 5 3" ><path d="M0 0h5L2.5 3z" fill="#3c3c3c"/></svg>
<div class="hs" style="left:3px;top:174px;width:20px"></div>
<svg class="abs" style="left:6px;top:184.6px" width="14" height="14" viewBox="0 0 14 14" ><path d="M8.2 0.5L13.5 5.8L12 6.2L9.6 8.6L9.3 11.6L2.4 4.7L5.4 4.4L7.8 2z" fill="#6e6e6e"/><path d="M5.6 8.4L0.6 13.4" stroke="#6e6e6e" stroke-width="1.4"/></svg>
</div>
<div class="abs" id="dtool">
<span class="tx" style="left:13.3px;font-size:12px;letter-spacing:-0.101px;top:1px;">Debugger</span>
<svg class="abs" style="left:91px;top:9px" width="12" height="10" viewBox="0 0 12 10" ><rect width="12" height="10" fill="#6e6e6e"/><path d="M3.5 2.5L6.5 5L3.5 7.5" stroke="#f2f2f2" stroke-width="1.5" fill="none"/></svg>
<span class="tx" style="left:109px;font-size:12px;letter-spacing:-0.290px;top:1px;">Console</span>
<span class="tx" style="left:172.1px;font-size:12px;letter-spacing:0.279px;top:1px;">Output</span>
<svg class="abs" style="left:221.3px;top:9.5px" width="8" height="8" viewBox="0 0 8 8" ><path d="M0.5 0.5L7.5 7.5M7.5 0.5L0.5 7.5" stroke="#a8a8a8" stroke-width="1" fill="none"/></svg>
<svg class="abs" style="left:251px;top:8px" width="12" height="11" viewBox="0 0 12 11" ><rect y="0" width="12" height="2" fill="#5a5a5a"/><rect y="4" width="12" height="3" fill="#389fd6"/><rect y="9" width="12" height="2" fill="#5a5a5a"/></svg>
<div class="vs" style="left:273px;top:3px;height:20px"></div>
<svg class="abs" style="left:284px;top:6px" width="13" height="13" viewBox="0 0 13 13" ><path d="M1 6.5L5.5 2L10 6.5" fill="none" stroke="#389fd6" stroke-width="1.8"/><path d="M12.5 3v6.5H6z" fill="#389fd6"/><rect x="0" y="11" width="12" height="2" fill="#5a5a5a"/></svg>
<svg class="abs" style="left:310px;top:4px" width="12" height="15" viewBox="0 0 12 15" ><rect x="5" y="2" width="2" height="6" fill="#389fd6"/><path d="M1.5 7h9L6 11.8z" fill="#389fd6"/><rect x="0" y="13" width="12" height="2" fill="#5a5a5a"/></svg>
<svg class="abs" style="left:336px;top:4px" width="12" height="15" viewBox="0 0 12 15" ><rect x="5" y="2" width="2" height="6" fill="#db5860"/><path d="M1.5 7h9L6 11.8z" fill="#db5860"/><rect x="0" y="13" width="12" height="2" fill="#5a5a5a"/></svg>
<svg class="abs" style="left:362px;top:5px" width="12" height="14" viewBox="0 0 12 14" ><path d="M1.5 6.3h9L6 1.3z" fill="#389fd6"/><rect x="5" y="6" width="2" height="4.8" fill="#389fd6"/><rect x="0" y="12" width="12" height="2" fill="#5a5a5a"/></svg>
<svg class="abs" style="left:387.5px;top:6.5px" width="14" height="14" viewBox="0 0 14 14" ><path d="M0.5 0.5L6 6" stroke="#389fd6" stroke-width="1.9"/><path d="M7.6 1.2V7.6H1.2z" fill="#389fd6"/><path d="M8.6 5.5h1.6M10.8 5.5h1.6M8.6 13.5h1.6M10.8 13.5h1.6M10.5 6v7" stroke="#3c3c3c" stroke-width="0.9" fill="none"/></svg>
<div class="vs" style="left:410px;top:3px;height:20px"></div>
<svg class="abs" style="left:421px;top:7px" width="12" height="12" viewBox="0 0 12 12" ><path d="M0 0h12v12H0z M2 2v2h8V2z M2 5.5v1.8h2V5.5z M5 5.5v1.8h2V5.5z M8 5.5v1.8h2V5.5z M2 8.5v1.8h2V8.5z M5 8.5v1.8h2V8.5z M8 8.5v1.8h2V8.5z" fill="#b9b9b9" fill-rule="evenodd"/></svg>
<div class="abs" style="left:442px;top:2px;width:22px;height:22px;border-radius:3px;background:#cfcfcf"></div>
<svg class="abs" style="left:446px;top:6px;will-change:transform" width="14" height="14" viewBox="0 0 14 14" ><path d="M7 0L14 7L7 14L0 7z" fill="#f3c67f"/><text x="7" y="10.2" text-anchor="middle" font-family="Liberation Sans,sans-serif" font-size="11" fill="#4a3a1c">c</text></svg>
<svg class="abs" style="left:472px;top:6px;will-change:transform" width="14" height="14" viewBox="0 0 14 14" ><circle cx="7" cy="7" r="7" fill="#f3c67f"/><text x="7" y="9.8" text-anchor="middle" font-family="Liberation Sans,sans-serif" font-size="9.5" fill="#4a3a1c">@</text></svg>
<svg class="abs" style="left:497.1px;top:7px;will-change:transform" width="14" height="12" viewBox="0 0 14 12" ><rect x="5.5" y="1" width="8" height="2.2" fill="#389fd6"/><rect x="5.5" y="5" width="8" height="2.2" fill="#389fd6"/><rect x="5.5" y="9" width="8" height="2.2" fill="#389fd6"/><text transform="scale(0.5)" font-family="Liberation Sans,sans-serif" font-size="10.6" fill="#6e6e6e"><tspan x="0.8" y="7.8">1</tspan><tspan x="0.8" y="15.8">2</tspan><tspan x="0.8" y="23.8">3</tspan></text></svg>
<svg class="abs" style="left:526px;top:8px" width="14" height="14" viewBox="0 0 14 14" ><rect x="0" y="0" width="10" height="2" fill="#5a5a5a"/><rect x="0" y="4" width="7" height="2" fill="#5a5a5a"/><rect x="0" y="8" width="4" height="2" fill="#5a5a5a"/><path d="M5 9h8M9 5v8" stroke="#db5860" stroke-width="2"/></svg>
<div class="abs" id="dtabline"></div>
</div>
<div class="abs" id="frames">
<div class="abs" id="fhead"><span class="tx" style="left:13.3px;font-size:12px;letter-spacing:-0.695px;">Frames</span></div>
<div class="abs" id="ftool"><svg class="abs" style="left:570.2px;top:8px" width="10" height="12" viewBox="0 0 10 12" ><path d="M5 12V1.4M0.8 5.6L5 1.3L9.2 5.6" fill="none" stroke="#6e6e6e" stroke-width="1.8"/></svg><svg class="abs" style="left:596.3px;top:8px" width="10" height="12" viewBox="0 0 10 12" ><path d="M5 0V10.6M0.8 6.4L5 10.7L9.2 6.4" fill="none" stroke="#6e6e6e" stroke-width="1.8"/></svg></div>
<div class="fr" style="top:57px">
<svg class="abs" style="left:9.3px;top:4px" width="13" height="13" viewBox="0 0 13 13" ><path d="M0.75 8V0.75H8" fill="none" stroke="#6e6e6e" stroke-width="1.8"/><rect x="3.9" y="3.9" width="8.2" height="8.2" fill="none" stroke="#6e6e6e" stroke-width="1.8"/></svg>
<span class="tx" style="left:26.4px;font-size:13px;letter-spacing:0.073px;">control.php:292,</span>
<span class="tx" style="left:125.2px;font-size:13px;letter-spacing:0.207px;font-style:italic;">block-&gt;main()</span>
</div>
<div class="fr sel" style="top:78px">
<svg class="abs" style="left:9.3px;top:4px" width="13" height="13" viewBox="0 0 13 13" ><path d="M0.75 8V0.75H8" fill="none" stroke="#8a8f96" stroke-width="1.8"/><rect x="3.9" y="3.9" width="8.2" height="8.2" fill="none" stroke="#8a8f96" stroke-width="1.8"/></svg>
<span class="tx" style="left:26.4px;font-size:13px;letter-spacing:-0.105px;">router.class.php:1469,</span>
<span class="tx" style="left:157.6px;font-size:13px;letter-spacing:-0.010px;font-style:italic;">call_user_func_array:{D:\xampp\zentao\framework\base\router.class.php:1469}()</span>
</div>
<div class="fr" style="top:99px">
<svg class="abs" style="left:9.3px;top:4px" width="13" height="13" viewBox="0 0 13 13" ><path d="M0.75 8V0.75H8" fill="none" stroke="#6e6e6e" stroke-width="1.8"/><rect x="3.9" y="3.9" width="8.2" height="8.2" fill="none" stroke="#6e6e6e" stroke-width="1.8"/></svg>
<span class="tx" style="left:26.4px;font-size:13px;letter-spacing:-0.105px;">router.class.php:1469,</span>
<span class="tx" style="left:157.6px;font-size:13px;letter-spacing:0.235px;font-style:italic;">baseRouter-&gt;loadModule()</span>
</div>
<div class="fr" style="top:120px">
<svg class="abs" style="left:9.3px;top:4px" width="13" height="13" viewBox="0 0 13 13" ><path d="M0.75 8V0.75H8" fill="none" stroke="#6e6e6e" stroke-width="1.8"/><rect x="3.9" y="3.9" width="8.2" height="8.2" fill="none" stroke="#6e6e6e" stroke-width="1.8"/></svg>
<span class="tx" style="left:26.4px;font-size:13px;letter-spacing:-0.166px;">index.php:67,</span>
<span class="tx" style="left:108.3px;font-size:13px;letter-spacing:-0.227px;font-style:italic;">{main}()</span>
</div>
</div>
<div class="abs" id="split"></div>
<div class="abs" id="vars">
<div class="abs" id="vhead"><span class="tx" style="left:13.1px;font-size:12px;letter-spacing:-0.249px;">Variables</span></div>
<div class="abs" id="vtool"><div class="abs" id="vsel"></div>
<svg class="abs" style="left:7px;top:8px" width="10" height="10" viewBox="0 0 10 10" ><path d="M0 5h10M5 0v10" stroke="#5a5a5a" stroke-width="1.6"/></svg>
<svg class="abs" style="left:7px;top:38.2px" width="10" height="2" viewBox="0 0 10 2" ><rect width="10" height="1.6" fill="#c4c4c4"/></svg>
<svg class="abs" style="left:6.5px;top:62.5px" width="11" height="6" viewBox="0 0 11 6" ><path d="M0 6L5.5 0L11 6z" fill="#c6c6c6"/></svg>
<svg class="abs" style="left:6.5px;top:88px" width="11" height="6" viewBox="0 0 11 6" ><path d="M0 0L5.5 6L11 0z" fill="#c6c6c6"/></svg>
<svg class="abs" style="left:6px;top:110px" width="12" height="13" viewBox="0 0 12 13" ><path d="M0 0h9v1.5H1.5V10H0z" fill="#c4c4c4"/><path d="M3 3h9v10H3z M4.8 5.5v1.2h5.4V5.5z M4.8 7.7v1.2h5.4V7.7z M4.8 9.9v1.2h5.4V9.9z" fill="#c4c4c4" fill-rule="evenodd"/></svg>
<svg class="abs" style="left:4.3px;top:139.8px" width="15" height="7" viewBox="0 0 15 7" ><ellipse cx="3.8" cy="3.5" rx="3" ry="2.7" fill="none" stroke="#5a5a5a" stroke-width="1.5"/><ellipse cx="11.2" cy="3.5" rx="3" ry="2.7" fill="none" stroke="#5a5a5a" stroke-width="1.5"/><path d="M6.3 2.6h2.4" stroke="#5a5a5a" stroke-width="1.3"/></svg>
</div>
<div class="vr" style="top:27px">
<svg class="abs" style="left:3px;top:6px" width="8" height="9" viewBox="0 0 8 9" ><path d="M0 0L8 4.5L0 9z" fill="#adadad"/></svg>
<svg class="abs" style="left:20.600000000000023px;top:4px;will-change:transform" width="14" height="15" viewBox="0 0 14 15" ><rect x="5.4" y="1.3" width="8" height="2.5" fill="#62b9dc"/><rect x="5.4" y="6.3" width="8" height="2.5" fill="#62b9dc"/><rect x="5.4" y="11.3" width="8" height="2.5" fill="#62b9dc"/><text transform="scale(0.5)" font-family="Liberation Sans,sans-serif" font-size="10.4" fill="#5e5e5e"><tspan x="0.8" y="7.8">1</tspan><tspan x="0.8" y="18">2</tspan><tspan x="0.8" y="28.2">3</tspan></text></svg>
<span class="tx" style="left:39.8px;font-size:12.5px;letter-spacing:-0.641px;color:#8b1a1a;">$_COOKIE</span>
<span class="tx" style="left:103px;font-size:12.5px;letter-spacing:-0.600px;">=</span>
<span class="tx" style="left:115.2px;font-size:12.5px;letter-spacing:0.082px;color:#8a8a8a;">{array}</span>
<span class="tx" style="left:158.1px;font-size:12.5px;letter-spacing:-0.333px;">[8]</span>
</div>
<div class="vr" style="top:47px">
<svg class="abs" style="left:3px;top:6px" width="8" height="9" viewBox="0 0 8 9" ><path d="M0 0L8 4.5L0 9z" fill="#adadad"/></svg>
<svg class="abs" style="left:20.600000000000023px;top:4px;will-change:transform" width="14" height="15" viewBox="0 0 14 15" ><rect x="5.4" y="1.3" width="8" height="2.5" fill="#62b9dc"/><rect x="5.4" y="6.3" width="8" height="2.5" fill="#62b9dc"/><rect x="5.4" y="11.3" width="8" height="2.5" fill="#62b9dc"/><text transform="scale(0.5)" font-family="Liberation Sans,sans-serif" font-size="10.4" fill="#5e5e5e"><tspan x="0.8" y="7.8">1</tspan><tspan x="0.8" y="18">2</tspan><tspan x="0.8" y="28.2">3</tspan></text></svg>
<span class="tx" style="left:39.8px;font-size:12.5px;letter-spacing:-1.180px;color:#8b1a1a;">$_GET</span>
<span class="tx" style="left:79px;font-size:12.5px;letter-spacing:-0.500px;">=</span>
<span class="tx" style="left:91.3px;font-size:12.5px;letter-spacing:0.082px;color:#8a8a8a;">{array}</span>
<span class="tx" style="left:134.2px;font-size:12.5px;letter-spacing:-0.333px;">[3]</span>
</div>
<div class="vr" style="top:67px">
<svg class="abs" style="left:3px;top:6px" width="8" height="9" viewBox="0 0 8 9" ><path d="M0 0L8 4.5L0 9z" fill="#adadad"/></svg>
<svg class="abs" style="left:20.600000000000023px;top:4px;will-change:transform" width="14" height="15" viewBox="0 0 14 15" ><rect x="5.4" y="1.3" width="8" height="2.5" fill="#62b9dc"/><rect x="5.4" y="6.3" width="8" height="2.5" fill="#62b9dc"/><rect x="5.4" y="11.3" width="8" height="2.5" fill="#62b9dc"/><text transform="scale(0.5)" font-family="Liberation Sans,sans-serif" font-size="10.4" fill="#5e5e5e"><tspan x="0.8" y="7.8">1</tspan><tspan x="0.8" y="18">2</tspan><tspan x="0.8" y="28.2">3</tspan></text></svg>
<span class="tx" style="left:39.8px;font-size:12.5px;letter-spacing:-1.160px;color:#8b1a1a;">$_SERVER</span>
<span class="tx" style="left:101.1px;font-size:12.5px;letter-spacing:-0.500px;">=</span>
<span class="tx" style="left:113.4px;font-size:12.5px;letter-spacing:0.082px;color:#8a8a8a;">{array}</span>
<span class="tx" style="left:156.3px;font-size:12.5px;letter-spacing:-0.237px;">[39]</span>
</div>
<div class="vr" style="top:87px">
<svg class="abs" style="left:3px;top:6px" width="8" height="9" viewBox="0 0 8 9" ><path d="M0 0L8 4.5L0 9z" fill="#adadad"/></svg>
<svg class="abs" style="left:20.600000000000023px;top:4px;will-change:transform" width="14" height="15" viewBox="0 0 14 15" ><rect x="5.4" y="1.3" width="8" height="2.5" fill="#62b9dc"/><rect x="5.4" y="6.3" width="8" height="2.5" fill="#62b9dc"/><rect x="5.4" y="11.3" width="8" height="2.5" fill="#62b9dc"/><text transform="scale(0.5)" font-family="Liberation Sans,sans-serif" font-size="10.4" fill="#5e5e5e"><tspan x="0.8" y="7.8">1</tspan><tspan x="0.8" y="18">2</tspan><tspan x="0.8" y="28.2">3</tspan></text></svg>
<span class="tx" style="left:39.8px;font-size:12.5px;letter-spacing:-0.797px;color:#8b1a1a;">$_SESSION</span>
<span class="tx" style="left:107.9px;font-size:12.5px;letter-spacing:-0.600px;">=</span>
<span class="tx" style="left:120.1px;font-size:12.5px;letter-spacing:0.082px;color:#8a8a8a;">{array}</span>
<span class="tx" style="left:163px;font-size:12.5px;letter-spacing:-0.233px;">[1]</span>
</div>
<div class="vr" style="top:107px">
<svg class="abs" style="left:3px;top:6px" width="8" height="9" viewBox="0 0 8 9" ><path d="M0 0L8 4.5L0 9z" fill="#adadad"/></svg>
<svg class="abs" style="left:21px;top:3.5px;will-change:transform" width="14" height="14" viewBox="0 0 14 14" ><path d="M7 0L14 7L7 14L0 7z" fill="#f6cf8e"/><text x="7" y="10.2" text-anchor="middle" font-family="Liberation Sans,sans-serif" font-size="11" fill="#4a3a1c">c</text></svg>
<span class="tx" style="left:39.8px;font-size:12.5px;letter-spacing:-0.053px;">Constants</span>
</div>
</div>
</body>
</html>
